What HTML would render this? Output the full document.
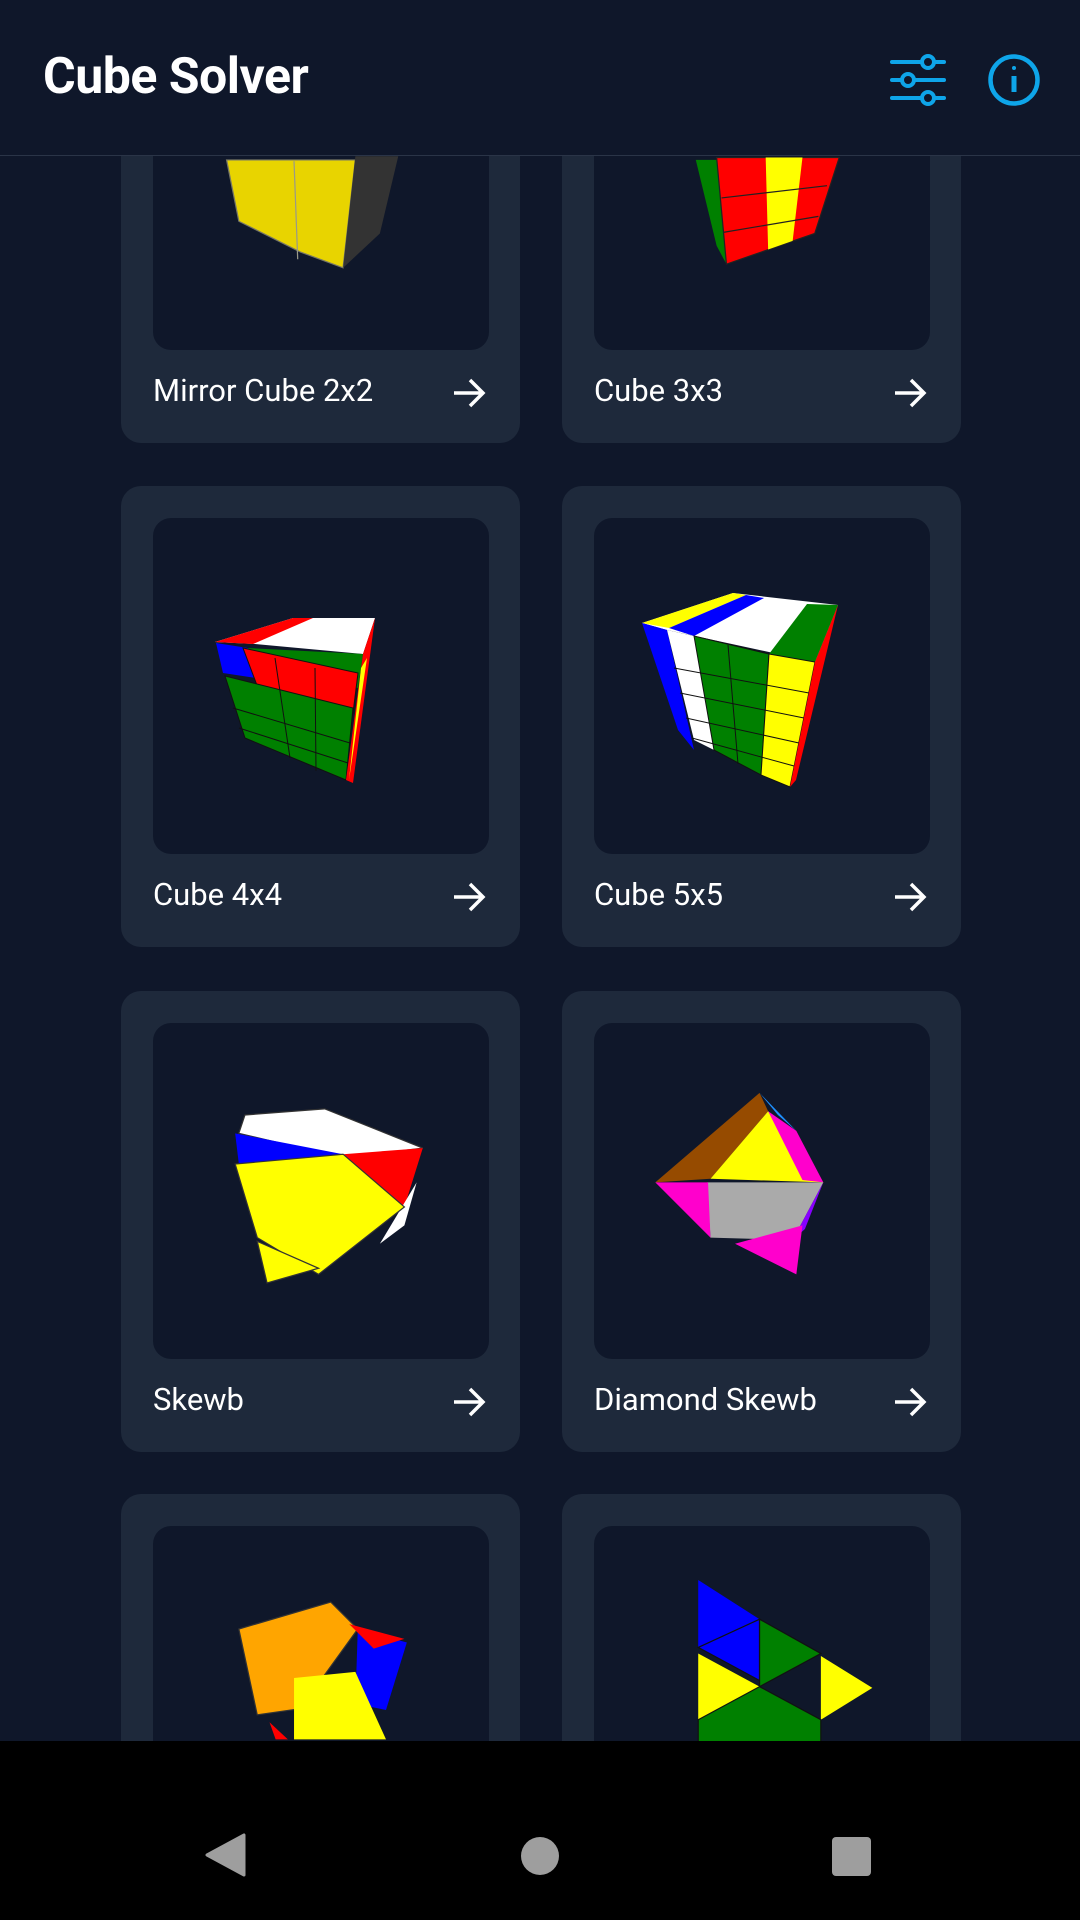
<!DOCTYPE html>
<html><head><meta charset="utf-8"><style>
*{margin:0;padding:0;box-sizing:border-box}
html,body{width:1080px;height:1920px;overflow:hidden}
body{background:#0f172a;position:relative;font-family:"Roboto","Liberation Sans",sans-serif}
#wrap{position:absolute;left:0;top:0;width:1080px;height:1920px;overflow:hidden}
.hdr{position:absolute;left:0;top:0;width:1080px;height:156px;background:#0f172a;border-bottom:1px solid #2a3447;z-index:5}
.title{position:absolute;left:43px;top:48px;font-size:50px;font-weight:bold;color:#fff;letter-spacing:-0.5px}
.card{position:absolute;width:399px;height:461px;background:#1e293b;border-radius:20px}
.inner{position:absolute;left:32px;top:32px;width:336px;height:336px;background:#0f172a;border-radius:18px;overflow:hidden}
.inner svg{width:336px;height:336px;display:block}
.lbl{position:absolute;left:32px;top:390px;font-size:31px;color:#fff}
.arr{position:absolute;left:330px;top:395px}
.nav{position:absolute;left:0;top:1741px;width:1080px;height:179px;background:#000;z-index:6}
</style></head><body><div id="wrap">
<div class="hdr"><div class="title">Cube Solver</div>
<svg style="position:absolute;left:888px;top:52px" width="60" height="56" viewBox="0 0 60 56" fill="none" stroke="#0ea5e9" stroke-width="4" stroke-linecap="round">
<line x1="4" y1="10" x2="56" y2="10"/><line x1="4" y1="28" x2="56" y2="28"/><line x1="4" y1="46" x2="56" y2="46"/>
<circle cx="40" cy="10" r="6" fill="#0f172a"/><circle cx="20" cy="28" r="6" fill="#0f172a"/><circle cx="40" cy="46" r="6" fill="#0f172a"/></svg>
<svg style="position:absolute;left:986px;top:52px" width="56" height="56" viewBox="0 0 56 56" fill="none" stroke="#0ea5e9" stroke-width="4.5">
<circle cx="28" cy="28" r="23.5"/><line x1="28" y1="24" x2="28" y2="40" stroke-width="5"/><circle cx="28" cy="16" r="2" fill="#0ea5e9" stroke="none"/></svg>
</div>

<div class="card" style="left:121px;top:-18px"><div class="inner"><svg viewBox="0 0 274 274">
<polygon points="60,119 165,119 155,207 120,194 70,169" fill="#e8d400" stroke="#776" stroke-width="1"/>
<polygon points="165,116 200,116 185,179 155,207" fill="#333"/>
<line x1="115" y1="120" x2="118" y2="200" stroke="#998" /></svg></div>
<div class="lbl">Mirror Cube 2x2</div><svg class="arr" width="36" height="32" viewBox="0 0 36 32" fill="none" stroke="#fff" stroke-width="3.5"><path d="M3 16H32M19 3L32 16L19 29"/></svg></div>

<div class="card" style="left:562px;top:-18px"><div class="inner"><svg viewBox="0 0 274 274">
<polygon points="83,119 105,119 108,204 100,189" fill="#008000"/>
<polygon points="100,117 200,117 180,179 108,204" fill="#f00" stroke="#222" stroke-width="1"/>
<polygon points="140,117 170,117 162,185 142,192" fill="#ff0"/>
<line x1="104" y1="150" x2="190" y2="140" stroke="#222"/><line x1="106" y1="178" x2="183" y2="165" stroke="#222"/></svg></div>
<div class="lbl">Cube 3x3</div><svg class="arr" width="36" height="32" viewBox="0 0 36 32" fill="none" stroke="#fff" stroke-width="3.5"><path d="M3 16H32M19 3L32 16L19 29"/></svg></div>

<div class="card" style="left:121px;top:486px"><div class="inner"><svg viewBox="0 0 336 336">
<polygon points="62,124 140,100 222,100 210,136 102,126" fill="#fff"/>
<polygon points="62,124 140,100 160,100 100,126" fill="#f00"/>
<polygon points="95,130 210,136 205,170 85,140" fill="#008000"/>
<polygon points="63,125 95,130 103,160 70,155" fill="#00f"/>
<polygon points="90,130 205,155 200,195 105,170" fill="#f00" stroke="#111" stroke-width="1"/>
<polygon points="72,158 200,190 193,262 92,220" fill="#008000" stroke="#111" stroke-width="1"/>
<line x1="122" y1="140" x2="137" y2="240" stroke="#111"/><line x1="162" y1="150" x2="163" y2="253" stroke="#111"/>
<line x1="80" y1="190" x2="197" y2="225" stroke="#111"/><line x1="86" y1="210" x2="195" y2="245" stroke="#111"/>
<polygon points="210,136 222,100 200,265 193,262" fill="#f00"/><polygon points="208,150 214,140 196,262" fill="#ff0"/></svg></div>
<div class="lbl">Cube 4x4</div><svg class="arr" width="36" height="32" viewBox="0 0 36 32" fill="none" stroke="#fff" stroke-width="3.5"><path d="M3 16H32M19 3L32 16L19 29"/></svg></div>

<div class="card" style="left:562px;top:486px"><div class="inner"><svg viewBox="0 0 336 336">
<polygon points="48,105 139,75 244,87 221,144 73,112" fill="#fff"/>
<polygon points="48,105 139,75 152,77 75,110" fill="#ff0"/>
<polygon points="75,110 152,77 170,80 100,118" fill="#00f"/>
<polygon points="213,86 244,87 221,144 175,136" fill="#008000"/>
<polygon points="48,105 73,112 100,232 84,212" fill="#00f"/>
<polygon points="73,112 100,118 120,232 100,222" fill="#fff"/>
<polygon points="100,118 175,136 167,257 120,232" fill="#008000" stroke="#111" stroke-width="1"/>
<line x1="134" y1="127" x2="144" y2="246" stroke="#111"/>
<polygon points="175,136 221,144 196,269 167,257" fill="#ff0" stroke="#111" stroke-width="1"/>
<line x1="80" y1="150" x2="215" y2="175" stroke="#111"/><line x1="86" y1="175" x2="210" y2="200" stroke="#111"/><line x1="92" y1="200" x2="205" y2="225" stroke="#111"/><line x1="98" y1="220" x2="200" y2="248" stroke="#111"/>
<polygon points="244,87 221,144 196,269 202,262" fill="#f00"/></svg></div>
<div class="lbl">Cube 5x5</div><svg class="arr" width="36" height="32" viewBox="0 0 36 32" fill="none" stroke="#fff" stroke-width="3.5"><path d="M3 16H32M19 3L32 16L19 29"/></svg></div>

<div class="card" style="left:121px;top:991px"><div class="inner"><svg viewBox="0 0 274 274">
<polygon points="75,75 140,70 220,102 155,110 70,90" fill="#fff" stroke="#333" stroke-width="1"/>
<polygon points="67,90 155,107 70,115" fill="#00f"/>
<polygon points="155,107 220,102 205,150" fill="#f00"/>
<polygon points="215,130 205,165 185,180" fill="#fff"/>
<polygon points="67,115 155,107 205,150 135,205 85,175" fill="#ff0" stroke="#333" stroke-width="1"/>
<polygon points="85,178 135,200 93,212" fill="#ff0" stroke="#333" stroke-width="1"/></svg></div>
<div class="lbl">Skewb</div><svg class="arr" width="36" height="32" viewBox="0 0 36 32" fill="none" stroke="#fff" stroke-width="3.5"><path d="M3 16H32M19 3L32 16L19 29"/></svg></div>

<div class="card" style="left:562px;top:991px"><div class="inner"><svg viewBox="0 0 274 274">
<polygon points="50,130 135,57 142,72 95,127" fill="#964b00"/>
<polygon points="135,57 165,88 150,75" fill="#1e90ff"/>
<polygon points="95,127 142,72 187,130" fill="#ff0"/>
<polygon points="142,72 165,88 187,130 170,128" fill="#f0c"/>
<polygon points="92,130 187,130 162,177 95,175" fill="#aaa"/>
<polygon points="187,130 162,177 172,168" fill="#80f"/>
<polygon points="50,130 93,130 95,175" fill="#f0c"/>
<polygon points="115,180 170,165 165,205" fill="#f0c"/></svg></div>
<div class="lbl">Diamond Skewb</div><svg class="arr" width="36" height="32" viewBox="0 0 36 32" fill="none" stroke="#fff" stroke-width="3.5"><path d="M3 16H32M19 3L32 16L19 29"/></svg></div>

<div class="card" style="left:121px;top:1494px;height:300px"><div class="inner"><svg viewBox="0 0 274 274">
<polygon points="70,84 145,62 167,84 120,149 85,154" fill="#ffa500" stroke="#333" stroke-width="1"/>
<polygon points="167,84 207,95 190,150 165,145" fill="#00f"/>
<polygon points="160,80 205,92 180,100" fill="#f00"/>
<polygon points="115,124 165,119 190,174 115,174" fill="#ff0"/>
<polygon points="95,160 110,174 100,174" fill="#f00"/></svg></div></div>

<div class="card" style="left:562px;top:1494px;height:300px"><div class="inner"><svg viewBox="0 0 274 274">
<polygon points="85,44 135,76 85,99" fill="#00f"/>
<polygon points="85,99 135,76 135,126" fill="#00f" stroke="#111"/>
<polygon points="85,104 135,131 85,158" fill="#ff0"/>
<polygon points="135,76 185,104 135,131" fill="#008000" stroke="#111"/>
<polygon points="185,106 227,132 185,158" fill="#ff0"/>
<polygon points="85,158 135,131 185,158 185,176 85,176" fill="#008000" stroke="#111"/></svg></div></div>

<div class="nav">
<svg style="position:absolute;left:204px;top:92px" width="42" height="44" viewBox="0 0 42 44"><polygon points="40,2 40,42 3,22" fill="#9e9e9e" stroke="#9e9e9e" stroke-width="3" stroke-linejoin="round"/></svg>
<div style="position:absolute;left:521px;top:96px;width:38px;height:38px;border-radius:50%;background:#9e9e9e"></div>
<div style="position:absolute;left:832px;top:96px;width:39px;height:39px;border-radius:4px;background:#9e9e9e"></div>
</div>
</div></body></html>
